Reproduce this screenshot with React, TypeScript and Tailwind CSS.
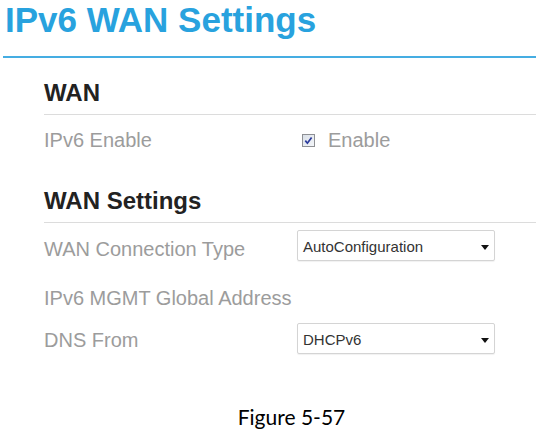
import { ReactNode } from 'react';

interface SelectProps {
  value: string;
}

function Select({ value }: SelectProps) {
  return (
    <div className="w-[198px] h-[31px] flex items-center justify-between border border-[#d4d4d4] rounded-[2px] bg-white pl-[5px] pr-[5px] shadow-[0_1px_1px_rgba(0,0,0,0.06)]">
      <span className="text-[15px] leading-[18px] text-[#333] pt-[2px]">{value}</span>
      <svg width="8" height="5" viewBox="0 0 8 5" className="mt-[4px]">
        <path d="M0 0 H8 L4 5 Z" fill="#111" />
      </svg>
    </div>
  );
}

function Label({ children, className = '' }: { children: ReactNode; className?: string }) {
  return (
    <div className={`w-[253px] shrink-0 text-[20px] leading-[24px] text-[#9c9c9c] ${className}`}>
      {children}
    </div>
  );
}

function Checkbox() {
  return (
    <svg width="13" height="13" viewBox="0 0 13 13">
      <defs>
        <linearGradient id="cb" x1="0" y1="0" x2="1" y2="1">
          <stop offset="0" stopColor="#d9dfe7" />
          <stop offset="1" stopColor="#f5f7fa" />
        </linearGradient>
      </defs>
      <rect x="0.5" y="0.5" width="12" height="12" fill="url(#cb)" stroke="#8e9094" />
      <path d="M3.3 6.6 L5.4 9.2 L9.6 3.4" fill="none" stroke="#2a3a9c" strokeWidth="1.7" />
    </svg>
  );
}

export default function App() {
  return (
    <div className="w-[536px] h-[439px] bg-white overflow-hidden font-['Liberation_Sans',Arial,sans-serif]">
      {/* Page title */}
      <h1 className="pl-[5px] text-[35px] leading-[40px] font-bold text-[#28a2de]">IPv6 WAN Settings</h1>
      <div className="ml-[3px] mt-[16px] h-[2px] bg-[#45ade2]" />

      <div className="pl-[44px]">
        {/* WAN */}
        <h2 className="mt-[21px] text-[24px] leading-[28px] font-bold text-[#222]">WAN</h2>
        <div className="mt-[7px] h-px bg-[#dcdcdc]" />
        <div className="mt-[13px] flex items-center">
          <Label>IPv6 Enable</Label>
          <div className="flex items-center pl-[5px] gap-[13px]">
            <Checkbox />
            <span className="text-[20px] leading-[24px] text-[#9c9c9c]">Enable</span>
          </div>
        </div>

        {/* WAN Settings */}
        <h2 className="mt-[35px] text-[24px] leading-[28px] font-bold text-[#222]">WAN Settings</h2>
        <div className="mt-[7px] h-px bg-[#dcdcdc]" />

        <div className="mt-[7px] flex items-start">
          <Label className="mt-[7px]">WAN Connection Type</Label>
          <Select value="AutoConfiguration" />
        </div>

        <div className="mt-[25px] flex">
          <Label className="w-auto">IPv6 MGMT Global Address</Label>
        </div>

        <div className="mt-[13px] flex items-start">
          <Label className="mt-[5px]">DNS From</Label>
          <Select value="DHCPv6" />
        </div>
      </div>

      {/* Caption */}
      <p className="mt-[51px] pl-[47px] text-center font-['Lato',sans-serif] text-[21px] leading-[24px] text-black">
        Figure 5-57
      </p>
    </div>
  );
}
